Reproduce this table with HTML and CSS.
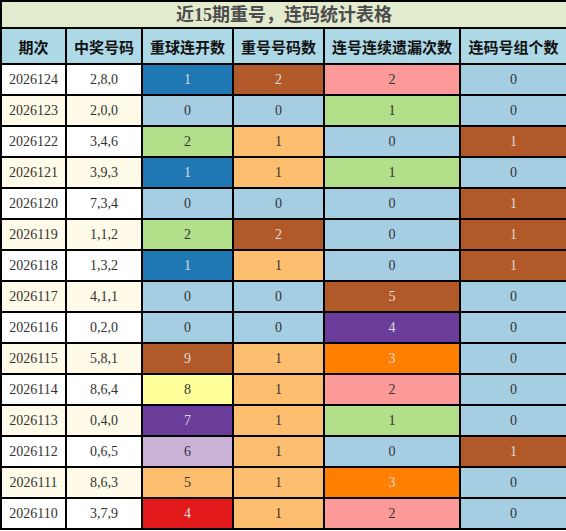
FILE: index.html
```html
<html>
<head>
<title>近15期重号，连码统计表格</title>
<meta charset="utf-8" name="viewport" content="width=device-width, initial-scale=1.0" />
<link rel="stylesheet" href="styles.css">
</head>
<body>

<table class="stats">
<colgroup>
<col class="c-issue">
<col class="c-nums">
<col class="c-a">
<col class="c-b">
<col class="c-c">
<col class="c-d">
</colgroup>
<thead>
<tr><th class="title" colspan="6">近15期重号，连码统计表格</th></tr>
<tr class="head">
<th>期次</th>
<th>中奖号码</th>
<th>重球连开数</th>
<th>重号号码数</th>
<th>连号连续遗漏次数</th>
<th>连码号组个数</th>
</tr>
</thead>
<tbody>
<tr class="odd"><td>2026124</td><td>2,8,0</td><td class="k4">1</td><td class="k12">2</td><td class="k5">2</td><td class="k1">0</td></tr>
<tr class="even"><td>2026123</td><td>2,0,0</td><td class="k1">0</td><td class="k1">0</td><td class="k3">1</td><td class="k1">0</td></tr>
<tr class="odd"><td>2026122</td><td>3,4,6</td><td class="k3">2</td><td class="k7">1</td><td class="k1">0</td><td class="k12">1</td></tr>
<tr class="even"><td>2026121</td><td>3,9,3</td><td class="k4">1</td><td class="k7">1</td><td class="k3">1</td><td class="k1">0</td></tr>
<tr class="odd"><td>2026120</td><td>7,3,4</td><td class="k1">0</td><td class="k1">0</td><td class="k1">0</td><td class="k12">1</td></tr>
<tr class="even"><td>2026119</td><td>1,1,2</td><td class="k3">2</td><td class="k12">2</td><td class="k1">0</td><td class="k12">1</td></tr>
<tr class="odd"><td>2026118</td><td>1,3,2</td><td class="k4">1</td><td class="k7">1</td><td class="k1">0</td><td class="k12">1</td></tr>
<tr class="even"><td>2026117</td><td>4,1,1</td><td class="k1">0</td><td class="k1">0</td><td class="k12">5</td><td class="k1">0</td></tr>
<tr class="odd"><td>2026116</td><td>0,2,0</td><td class="k1">0</td><td class="k1">0</td><td class="k10">4</td><td class="k1">0</td></tr>
<tr class="even"><td>2026115</td><td>5,8,1</td><td class="k12">9</td><td class="k7">1</td><td class="k8">3</td><td class="k1">0</td></tr>
<tr class="odd"><td>2026114</td><td>8,6,4</td><td class="k11">8</td><td class="k7">1</td><td class="k5">2</td><td class="k1">0</td></tr>
<tr class="even"><td>2026113</td><td>0,4,0</td><td class="k10">7</td><td class="k7">1</td><td class="k3">1</td><td class="k1">0</td></tr>
<tr class="odd"><td>2026112</td><td>0,6,5</td><td class="k9">6</td><td class="k7">1</td><td class="k1">0</td><td class="k12">1</td></tr>
<tr class="even"><td>2026111</td><td>8,6,3</td><td class="k7">5</td><td class="k7">1</td><td class="k8">3</td><td class="k1">0</td></tr>
<tr class="odd"><td>2026110</td><td>3,7,9</td><td class="k6">4</td><td class="k7">1</td><td class="k5">2</td><td class="k1">0</td></tr>
</tbody>
</table>

</body>
</html>
```

FILE: styles.css
```css
body {
    margin: 0;
    background-color: #fff;
    font-family: "Liberation Serif", "Noto Sans CJK SC", serif;
}

.stats {
    width: 566px;
    table-layout: fixed;
    border-collapse: collapse;
    border: 2px solid #000;
}

.c-issue { width: 65px; }
.c-nums { width: 76px; }
.c-a { width: 91px; }
.c-b { width: 91px; }
.c-c { width: 136px; }
.c-d { width: 107px; }

.stats th, .stats td {
    border: 2px solid #000;
    padding: 0;
    text-align: center;
    line-height: 1;
}

.title {
    height: 27px;
    background-color: #e3ebcf;
    color: #4d4d4d;
    font-size: 18px;
    font-weight: bold;
}

.head th {
    height: 36px;
    background-color: #add8e6;
    color: #111;
    font-family: "Noto Sans CJK SC", sans-serif;
    font-size: 15px;
    font-weight: bold;
}

.stats td {
    height: 31px;
    font-size: 14px;
    color: #333;
}

.odd td { background-color: #fff; }
.even td { background-color: #fffbe8; }

/* paired palette for the count cells */
.stats .k1 { background-color: #a6cee3; color: #333; }
.stats .k3 { background-color: #b2df8a; color: #333; }
.stats .k4 { background-color: #1f78b4; color: #ddd; }
.stats .k5 { background-color: #fb9a99; color: #333; }
.stats .k6 { background-color: #e31a1c; color: #ddd; }
.stats .k7 { background-color: #fdbf6f; color: #333; }
.stats .k8 { background-color: #ff7f00; color: #ddd; }
.stats .k9 { background-color: #cab2d6; color: #333; }
.stats .k10 { background-color: #6a3d9a; color: #ddd; }
.stats .k11 { background-color: #ffff99; color: #333; }
.stats .k12 { background-color: #b15928; color: #ddd; }
```
